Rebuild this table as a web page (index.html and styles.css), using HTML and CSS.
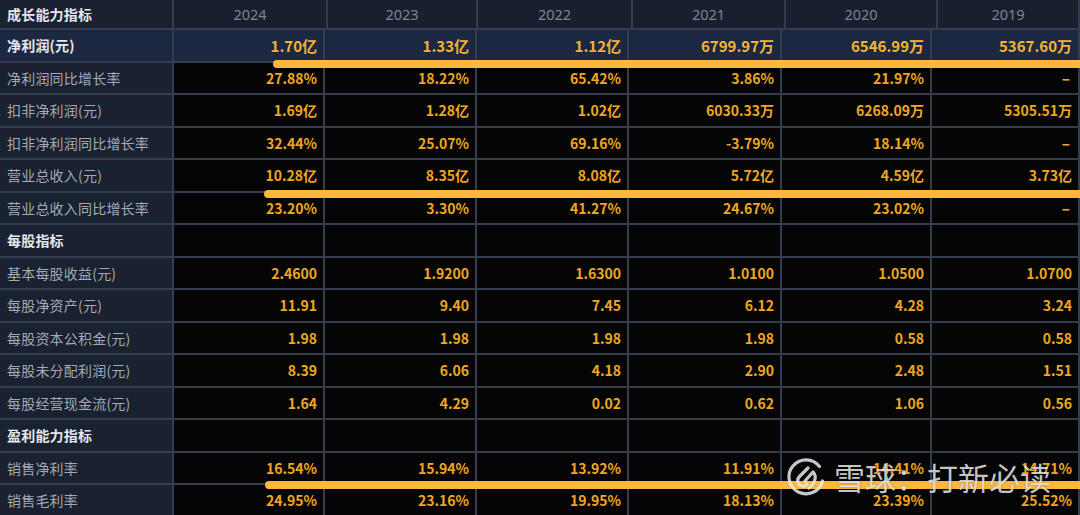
FILE: index.html
```html
<!DOCTYPE html>
<html lang="zh">
<head>
<meta charset="utf-8">
<link rel="stylesheet" href="styles.css">
</head>
<body>
<div class="page">
  <div class="row head">
    <div class="cell label section">成长能力指标</div>
    <div class="cell year">2024</div>
    <div class="cell year">2023</div>
    <div class="cell year">2022</div>
    <div class="cell year">2021</div>
    <div class="cell year">2020</div>
    <div class="cell year">2019</div>
  </div>
  <div class="row hl">
    <div class="cell label section">净利润(元)</div>
    <div class="cell val">1.70亿</div>
    <div class="cell val">1.33亿</div>
    <div class="cell val">1.12亿</div>
    <div class="cell val">6799.97万</div>
    <div class="cell val">6546.99万</div>
    <div class="cell val">5367.60万</div>
  </div>
  <div class="row">
    <div class="cell label">净利润同比增长率</div>
    <div class="cell val">27.88%</div>
    <div class="cell val">18.22%</div>
    <div class="cell val">65.42%</div>
    <div class="cell val">3.86%</div>
    <div class="cell val">21.97%</div>
    <div class="cell val dash">--</div>
  </div>
  <div class="row">
    <div class="cell label">扣非净利润(元)</div>
    <div class="cell val">1.69亿</div>
    <div class="cell val">1.28亿</div>
    <div class="cell val">1.02亿</div>
    <div class="cell val">6030.33万</div>
    <div class="cell val">6268.09万</div>
    <div class="cell val">5305.51万</div>
  </div>
  <div class="row">
    <div class="cell label">扣非净利润同比增长率</div>
    <div class="cell val">32.44%</div>
    <div class="cell val">25.07%</div>
    <div class="cell val">69.16%</div>
    <div class="cell val">-3.79%</div>
    <div class="cell val">18.14%</div>
    <div class="cell val dash">--</div>
  </div>
  <div class="row">
    <div class="cell label">营业总收入(元)</div>
    <div class="cell val">10.28亿</div>
    <div class="cell val">8.35亿</div>
    <div class="cell val">8.08亿</div>
    <div class="cell val">5.72亿</div>
    <div class="cell val">4.59亿</div>
    <div class="cell val">3.73亿</div>
  </div>
  <div class="row">
    <div class="cell label">营业总收入同比增长率</div>
    <div class="cell val">23.20%</div>
    <div class="cell val">3.30%</div>
    <div class="cell val">41.27%</div>
    <div class="cell val">24.67%</div>
    <div class="cell val">23.02%</div>
    <div class="cell val dash">--</div>
  </div>
  <div class="row">
    <div class="cell label section">每股指标</div>
    <div class="cell val"></div>
    <div class="cell val"></div>
    <div class="cell val"></div>
    <div class="cell val"></div>
    <div class="cell val"></div>
    <div class="cell val"></div>
  </div>
  <div class="row">
    <div class="cell label">基本每股收益(元)</div>
    <div class="cell val">2.4600</div>
    <div class="cell val">1.9200</div>
    <div class="cell val">1.6300</div>
    <div class="cell val">1.0100</div>
    <div class="cell val">1.0500</div>
    <div class="cell val">1.0700</div>
  </div>
  <div class="row">
    <div class="cell label">每股净资产(元)</div>
    <div class="cell val">11.91</div>
    <div class="cell val">9.40</div>
    <div class="cell val">7.45</div>
    <div class="cell val">6.12</div>
    <div class="cell val">4.28</div>
    <div class="cell val">3.24</div>
  </div>
  <div class="row">
    <div class="cell label">每股资本公积金(元)</div>
    <div class="cell val">1.98</div>
    <div class="cell val">1.98</div>
    <div class="cell val">1.98</div>
    <div class="cell val">1.98</div>
    <div class="cell val">0.58</div>
    <div class="cell val">0.58</div>
  </div>
  <div class="row">
    <div class="cell label">每股未分配利润(元)</div>
    <div class="cell val">8.39</div>
    <div class="cell val">6.06</div>
    <div class="cell val">4.18</div>
    <div class="cell val">2.90</div>
    <div class="cell val">2.48</div>
    <div class="cell val">1.51</div>
  </div>
  <div class="row">
    <div class="cell label">每股经营现金流(元)</div>
    <div class="cell val">1.64</div>
    <div class="cell val">4.29</div>
    <div class="cell val">0.02</div>
    <div class="cell val">0.62</div>
    <div class="cell val">1.06</div>
    <div class="cell val">0.56</div>
  </div>
  <div class="row">
    <div class="cell label section">盈利能力指标</div>
    <div class="cell val"></div>
    <div class="cell val"></div>
    <div class="cell val"></div>
    <div class="cell val"></div>
    <div class="cell val"></div>
    <div class="cell val"></div>
  </div>
  <div class="row">
    <div class="cell label">销售净利率</div>
    <div class="cell val">16.54%</div>
    <div class="cell val">15.94%</div>
    <div class="cell val">13.92%</div>
    <div class="cell val">11.91%</div>
    <div class="cell val">14.41%</div>
    <div class="cell val">14.71%</div>
  </div>
  <div class="row">
    <div class="cell label">销售毛利率</div>
    <div class="cell val">24.95%</div>
    <div class="cell val">23.16%</div>
    <div class="cell val">19.95%</div>
    <div class="cell val">18.13%</div>
    <div class="cell val">23.39%</div>
    <div class="cell val">25.52%</div>
  </div>

  <div class="mark mark1"></div>
  <div class="mark mark2"></div>
  <div class="mark mark3"></div>

  <div class="watermark">
    <svg class="logo" width="40" height="40" viewBox="-20 -20 40 40">
      <path d="M 13.5 -10.5 A 17 17 0 1 0 16.5 4" fill="none" stroke="currentColor" stroke-width="3.2" stroke-linecap="round"/>
      <path d="M 2 -9 L -7 0 Q -10 4 -6 8 Q -2 11 1 7" fill="none" stroke="currentColor" stroke-width="3.2" stroke-linecap="round" stroke-linejoin="round"/>
      <path d="M -1 4 L 7 -5 Q 11 -1 8 5 Q 6 9 3 11" fill="none" stroke="currentColor" stroke-width="3.2" stroke-linecap="round" stroke-linejoin="round"/>
    </svg>
    <span class="wm-text">雪球：打新必读</span>
  </div>
</div>
</body>
</html>
```

FILE: styles.css
```css
html, body {
  margin: 0;
  padding: 0;
  background: #050505;
  overflow: hidden;
}

.page {
  position: relative;
  width: 1080px;
  height: 515px;
  overflow: hidden;
  font-family: "Noto Sans CJK SC", "Noto Sans", sans-serif;
  background: #050505;
}

.row {
  display: grid;
  grid-template-columns: 174px 151px 152px 152px 153px 150px 1fr;
  height: 32.5px;
}

.row.head {
  grid-template-columns: 174px 154px 150px 155px 153px 152px 1fr;
  height: 30px;
  background: #191f2e;
}

.cell {
  box-sizing: border-box;
  display: flex;
  align-items: center;
  border-right: 2px solid #343c50;
  border-bottom: 2px solid #343c50;
  white-space: nowrap;
  overflow: hidden;
}

.label {
  background: #1a2130;
  color: #a2aab7;
  font-size: 14px;
  padding-left: 7px;
  letter-spacing: 0.2px;
}

.label.section {
  color: #e4e8ef;
  font-weight: 700;
}

.year {
  justify-content: center;
  color: #7b8497;
  font-size: 14.5px;
  font-family: "Noto Sans", "Noto Sans CJK SC", sans-serif;
}

.val {
  justify-content: flex-end;
  padding-right: 6px;
  color: #eea71f;
  font-size: 14px;
  font-weight: 700;
  background: #050505;
}

.val.dash {
  letter-spacing: -2px;
  padding-right: 10px;
}

.row.hl .cell {
  background: #1c2742;
}

.row.hl .val {
  color: #f5b430;
  font-size: 15px;
  font-weight: 700;
}

.mark {
  position: absolute;
  height: 8px;
  border-radius: 4px;
  background: #fbb83d;
  right: -20px;
}

.mark1 { left: 273px; top: 60px; }
.mark2 { left: 264px; top: 190px; }
.mark3 { left: 265px; top: 481px; }

.watermark {
  position: absolute;
  left: 786px;
  top: 457px;
  display: flex;
  align-items: center;
  gap: 8px;
  color: rgba(232, 232, 232, 0.86);
}

.logo {
  display: block;
}

.wm-text {
  font-size: 31px;
  font-family: "Noto Sans CJK SC", sans-serif;
  line-height: 40px;
  text-shadow: 0 0 2px rgba(0, 0, 0, 0.3);
}
```
